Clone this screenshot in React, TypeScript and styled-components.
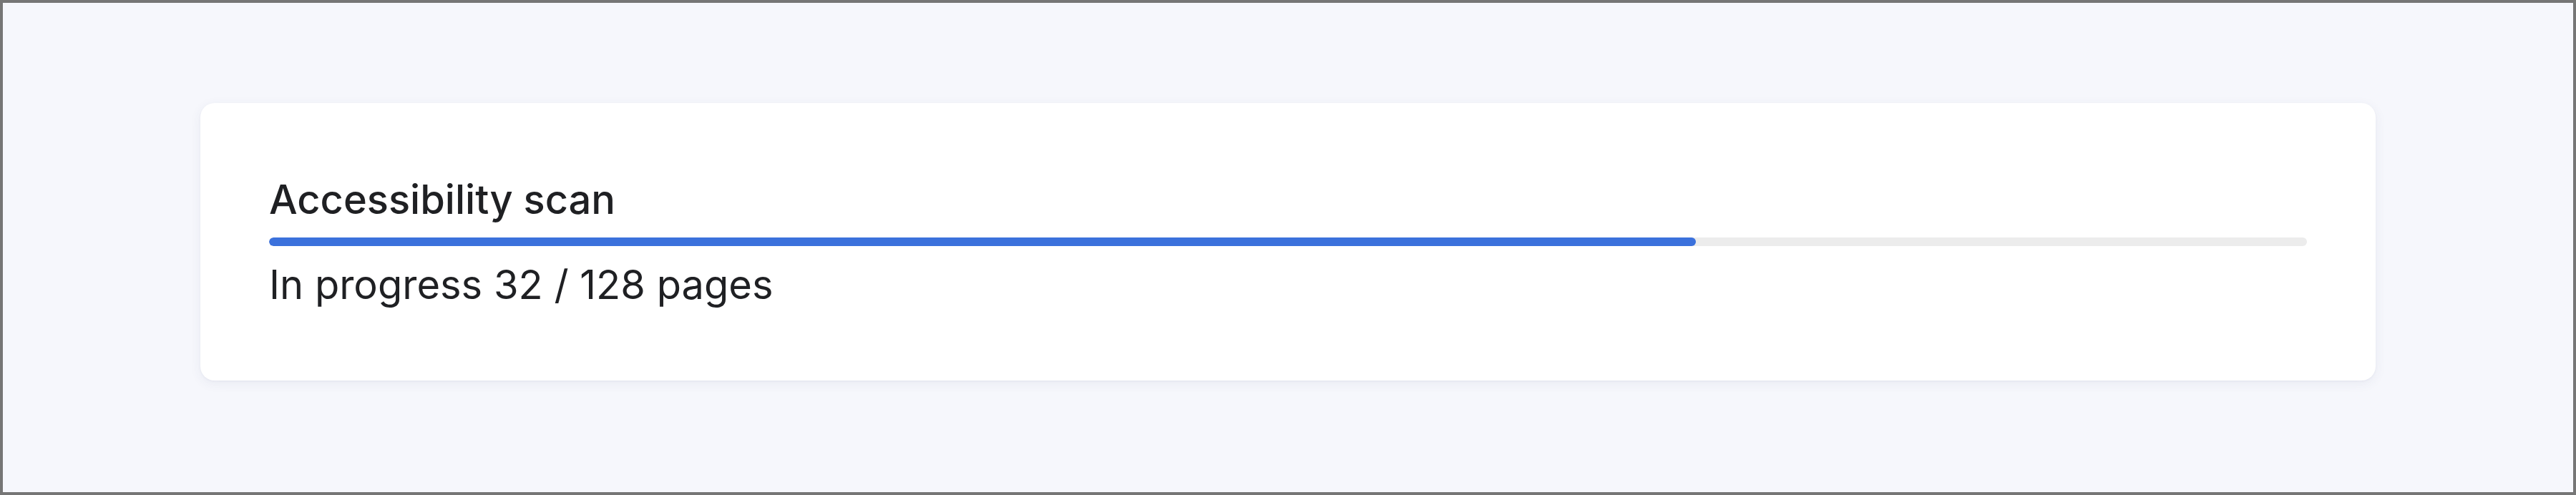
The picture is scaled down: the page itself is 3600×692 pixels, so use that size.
import React from "react";
import styled, { createGlobalStyle } from "styled-components";

const GlobalStyle = createGlobalStyle`
  html, body {
    margin: 0;
    padding: 0;
  }
  body {
    font-family: Inter, "Noto Sans", "Liberation Sans", sans-serif;
    color: #1f2023;
  }
  * { box-sizing: border-box; }
`;

const Page = styled.div`
  width: 3600px;
  height: 692px;
  border: 4px solid #767676;
  background: #f6f7fc;
  padding: 140px 276px 0 276px;
`;

const Card = styled.section`
  background: #ffffff;
  border-radius: 20px;
  box-shadow: 0 4px 16px rgba(60, 64, 120, 0.07), 0 1px 3px rgba(60, 64, 120, 0.05);
  height: 388px;
  padding: 101px 96px 0 96px;
  display: flex;
  flex-direction: column;
`;

const Title = styled.h2`
  margin: 0;
  font-size: 56px;
  line-height: 68px;
  font-weight: 500;
  color: #1f2023;
`;

const Track = styled.div`
  margin-top: 19px;
  height: 12px;
  border-radius: 6px;
  background: #ececec;
  overflow: hidden;
`;

const Fill = styled.div`
  height: 100%;
  border-radius: 6px;
  background: #3b71dc;
`;

const Status = styled.p`
  margin: 20px 0 0 0;
  font-size: 56px;
  line-height: 68px;
  font-weight: 400;
  color: #1f2023;
`;

export default function App() {
  const progress = 0.7;
  return (
    <>
      <GlobalStyle />
      <Page>
        <Card>
          <Title>Accessibility scan</Title>
          <Track>
            <Fill style={{ width: `${progress * 100}%` }} />
          </Track>
          <Status>In progress 32 / 128 pages</Status>
        </Card>
      </Page>
    </>
  );
}
